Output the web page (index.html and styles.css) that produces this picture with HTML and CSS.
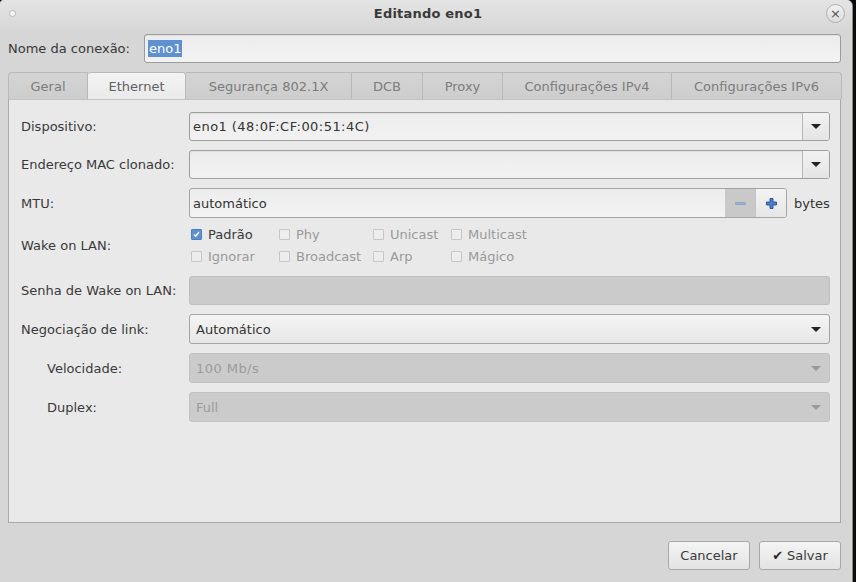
FILE: index.html
```html
<!DOCTYPE html>
<html lang="pt">
<head>
<meta charset="utf-8">
<title>Editando eno1</title>
<link rel="stylesheet" href="styles.css">
</head>
<body>
<div class="window">
  <div class="titlebar">
    <div class="tb-left"><span class="dot"></span></div>
    <div class="title">Editando eno1</div>
    <div class="tb-right"><span class="close">×</span></div>
  </div>
  <div class="body">
    <div class="name-row">
      <div class="name-label">Nome da conexão:</div>
      <div class="entry name-entry"><span class="sel">eno1</span></div>
    </div>
    <div class="notebook">
      <div class="tabs">
        <div class="tab t1">Geral</div>
        <div class="tab t2 active">Ethernet</div>
        <div class="tab t3">Segurança 802.1X</div>
        <div class="tab t4">DCB</div>
        <div class="tab t5">Proxy</div>
        <div class="tab t6">Configurações IPv4</div>
        <div class="tab t7">Configurações IPv6</div>
      </div>
      <div class="page">
        <div class="form">
          <div class="lbl">Dispositivo:</div>
          <div class="combo-entry">
            <div class="ce-text num">eno1 (48:0F:CF:00:51:4C)</div>
            <div class="ce-btn"><span class="arrow"></span></div>
          </div>

          <div class="lbl">Endereço MAC clonado:</div>
          <div class="combo-entry">
            <div class="ce-text"></div>
            <div class="ce-btn"><span class="arrow"></span></div>
          </div>

          <div class="lbl">MTU:</div>
          <div class="mtu">
            <div class="spin">
              <div class="spin-text">automático</div>
              <div class="spin-btn minus"><span class="minus-bar"></span></div>
              <div class="spin-btn plus">
                <svg width="13" height="13" viewBox="0 0 13 13"><path d="M5 1.5h3v3.5h3.5v3h-3.5v3.5h-3v-3.5h-3.5v-3h3.5z" fill="#4a7fc4" stroke="#2d5a9a" stroke-width="1"/></svg>
              </div>
            </div>
            <div class="unit">bytes</div>
          </div>

          <div class="lbl wake-lbl">Wake on LAN:</div>
          <div class="checks">
            <div class="chk on"><span class="box"><svg width="11" height="11" viewBox="0 0 11 11"><path d="M2.5 5.5l2 2 4-5" fill="none" stroke="#fff" stroke-width="1.8"/></svg></span>Padrão</div>
            <div class="chk"><span class="box"></span>Phy</div>
            <div class="chk"><span class="box"></span>Unicast</div>
            <div class="chk"><span class="box"></span>Multicast</div>
            <div class="chk"><span class="box"></span>Ignorar</div>
            <div class="chk"><span class="box"></span>Broadcast</div>
            <div class="chk"><span class="box"></span>Arp</div>
            <div class="chk"><span class="box"></span>Mágico</div>
          </div>

          <div class="lbl">Senha de Wake on LAN:</div>
          <div class="entry-dis"></div>

          <div class="lbl">Negociação de link:</div>
          <div class="combo">
            <div class="c-text">Automático</div>
            <span class="arrow"></span>
          </div>

          <div class="lbl sub">Velocidade:</div>
          <div class="combo dis">
            <div class="c-text num">100 Mb/s</div>
            <span class="arrow"></span>
          </div>

          <div class="lbl sub">Duplex:</div>
          <div class="combo dis">
            <div class="c-text">Full</div>
            <span class="arrow"></span>
          </div>
        </div>
      </div>
    </div>
    <div class="actions">
      <div class="btn">Cancelar</div>
      <div class="btn"><span class="chkmark">✔</span>Salvar</div>
    </div>
  </div>
</div>
</body>
</html>
```

FILE: styles.css
```css
html, body {
  margin: 0;
  padding: 0;
  background: #0b0a0c;
}
body {
  font-family: "DejaVu Sans", "Liberation Sans", sans-serif;
  font-size: 13px;
  color: #383838;
}
.window {
  width: 852px;
  height: 582px;
  background: #d6d6d6;
  border-right: 1px solid #8a8a8a;
  border-top-right-radius: 6px;
  border-top-left-radius: 4px;
  display: flex;
  flex-direction: column;
  overflow: hidden;
}
.titlebar {
  height: 28px;
  flex: none;
  display: grid;
  grid-template-columns: 1fr auto 1fr;
  align-items: center;
  background: linear-gradient(#e4e4e4, #d8d8d8);
  padding: 0 7px 0 9px;
}
.tb-left { display: flex; align-items: center; }
.tb-right { display: flex; justify-content: flex-end; align-items: center; }
.dot {
  width: 5px;
  height: 5px;
  border-radius: 50%;
  background: #f6f6f6;
  border: 1px solid #b8b8b8;
  margin-top: -2px;
}
.title {
  font-weight: bold;
  font-size: 13px;
  color: #3a3a3a;
  margin-top: -1px;
  padding-left: 2px;
  letter-spacing: 0.2px;
}
.close {
  width: 17px;
  height: 17px;
  border-radius: 50%;
  border: 1px solid #b0b0b0;
  background: linear-gradient(#f2f2f2, #dcdcdc);
  display: flex;
  align-items: center;
  justify-content: center;
  font-size: 13px;
  line-height: 1;
  color: #555;
  margin-top: -1px;
}
.body {
  flex: 1;
  display: flex;
  flex-direction: column;
  padding: 6px 11px 12px 8px;
}
.name-row {
  height: 29px;
  display: flex;
  align-items: center;
  flex: none;
}
.name-label {
  width: 136px;
  flex: none;
  color: #383838;
}
.entry {
  flex: 1;
  height: 27px;
  border: 1px solid #9c9c9c;
  border-radius: 3px;
  background: linear-gradient(#ececec, #f3f3f3);
  box-shadow: inset 0 1px 1px rgba(0,0,0,0.06);
  display: flex;
  align-items: center;
  padding-left: 3px;
}
.sel {
  background: #5e90d2;
  color: #fff;
  padding: 1px 1px 1px 1px;
  line-height: 15px;
}
.notebook {
  margin-top: 9px;
  flex: 1;
  display: flex;
  flex-direction: column;
}
.tabs {
  display: flex;
  height: 27px;
  flex: none;
}
.tab {
  flex: none;
  box-sizing: border-box;
  height: 27px;
  border: 1px solid #b9b9b9;
  border-bottom: none;
  border-left: none;
  background: linear-gradient(#d4d4d4, #cdcdcd);
  color: #7c7c7c;
  display: flex;
  align-items: center;
  justify-content: center;
  padding-top: 1px;
}
.tab.t1 { width: 80px; border-left: 1px solid #b9b9b9; border-top-left-radius: 4px; }
.tab.t2 { width: 98px; }
.tab.t3 { width: 166px; }
.tab.t4 { width: 71px; }
.tab.t5 { width: 80px; }
.tab.t6 { width: 169px; }
.tab.t7 { width: 170px; border-top-right-radius: 4px; }
.tab.active {
  background: linear-gradient(#f3f3f3, #eaeaea);
  color: #626262;
  border-top-left-radius: 3px;
  border-top-right-radius: 3px;
}
.page {
  flex: 1;
  background: #e9e9e9;
  border: 1px solid #a9a9a9;
  border-top-color: #c2c2c2;
  padding: 12px 12px;
}
.form {
  display: grid;
  grid-template-columns: 168px 1fr;
  grid-template-rows: 29px 29px 30px 40px 29px 30px 30px 30px;
  row-gap: 9px;
}
.lbl {
  align-self: center;
  color: #3a3a3a;
  white-space: nowrap;
}
.lbl.sub { padding-left: 26px; }
.wake-lbl { margin-top: -4px; }
.combo-entry {
  display: flex;
  border: 1px solid #9e9e9e;
  border-radius: 3px;
  background: linear-gradient(#ececec, #f2f2f2);
  box-shadow: inset 0 1px 1px rgba(0,0,0,0.06);
}
.ce-text {
  flex: 1;
  display: flex;
  align-items: center;
  padding-left: 3px;
  color: #333;
}
.num { letter-spacing: 0.45px; }
.ce-btn {
  width: 26px;
  border-left: 1px solid #b8b8b8;
  background: linear-gradient(#f2f2f2, #e4e4e4);
  border-radius: 0 2px 2px 0;
  display: flex;
  align-items: center;
  justify-content: center;
}
.arrow {
  width: 0;
  height: 0;
  border-left: 5px solid transparent;
  border-right: 5px solid transparent;
  border-top: 5px solid #222;
}
.mtu {
  display: flex;
  align-items: center;
}
.spin {
  width: 598px;
  height: 30px;
  box-sizing: border-box;
  display: flex;
  border: 1px solid #a4a4a4;
  border-radius: 3px;
  background: linear-gradient(#ececec, #f3f3f3);
  overflow: hidden;
}
.spin-text {
  flex: 1;
  display: flex;
  align-items: center;
  padding-left: 3px;
  color: #333;
}
.spin-btn {
  width: 30px;
  display: flex;
  align-items: center;
  justify-content: center;
}
.spin-btn.minus {
  background: #c9c9c9;
}
.minus-bar {
  width: 11px;
  height: 3px;
  background: #9db4d4;
  border: 1px solid #8aa3c6;
  border-radius: 1px;
  box-sizing: border-box;
}
.spin-btn.plus {
  background: linear-gradient(#f3f3f3, #e6e6e6);
  border-left: 1px solid #c4c4c4;
}
.unit {
  margin-left: 7px;
  color: #333;
}
.checks {
  display: grid;
  grid-template-columns: 88px 94px 78px 120px;
  grid-template-rows: 20px 20px;
  row-gap: 2px;
  margin-top: -3px;
  padding-left: 2px;
  color: #9a9a9a;
}
.chk {
  display: flex;
  align-items: center;
  white-space: nowrap;
}
.chk.on { color: #383838; }
.box {
  width: 11px;
  height: 11px;
  box-sizing: border-box;
  border: 1px solid #c6c6c6;
  background: #ededed;
  border-radius: 1px;
  margin-right: 6px;
  display: flex;
  align-items: center;
  justify-content: center;
}
.chk.on .box {
  background: #5f91d2;
  border-color: #4f7fbf;
}
.entry-dis {
  border: 1px solid #bebebe;
  border-radius: 3px;
  background: #cbcbcb;
}
.combo {
  display: flex;
  align-items: center;
  border: 1px solid #a4a4a4;
  border-radius: 3px;
  background: linear-gradient(#f4f4f4, #e6e6e6);
  padding: 0 8px 0 6px;
}
.c-text {
  flex: 1;
  color: #333;
}
.combo.dis {
  background: #cbcbcb;
  border-color: #c2c2c2;
}
.combo.dis .c-text { color: #9c9c9c; }
.combo.dis .arrow { border-top-color: #9a9a9a; }
.actions {
  margin-top: 18px;
  height: 29px;
  flex: none;
  display: flex;
  justify-content: flex-end;
  gap: 9px;
}
.btn {
  width: 82px;
  box-sizing: border-box;
  height: 29px;
  border: 1px solid #a8a8a8;
  border-radius: 3px;
  background: linear-gradient(#f4f4f4, #e3e3e3);
  display: flex;
  align-items: center;
  justify-content: center;
  color: #3a3a3a;
}
.chkmark {
  font-size: 13px;
  margin-right: 4px;
  color: #2a2a2a;
}
```
